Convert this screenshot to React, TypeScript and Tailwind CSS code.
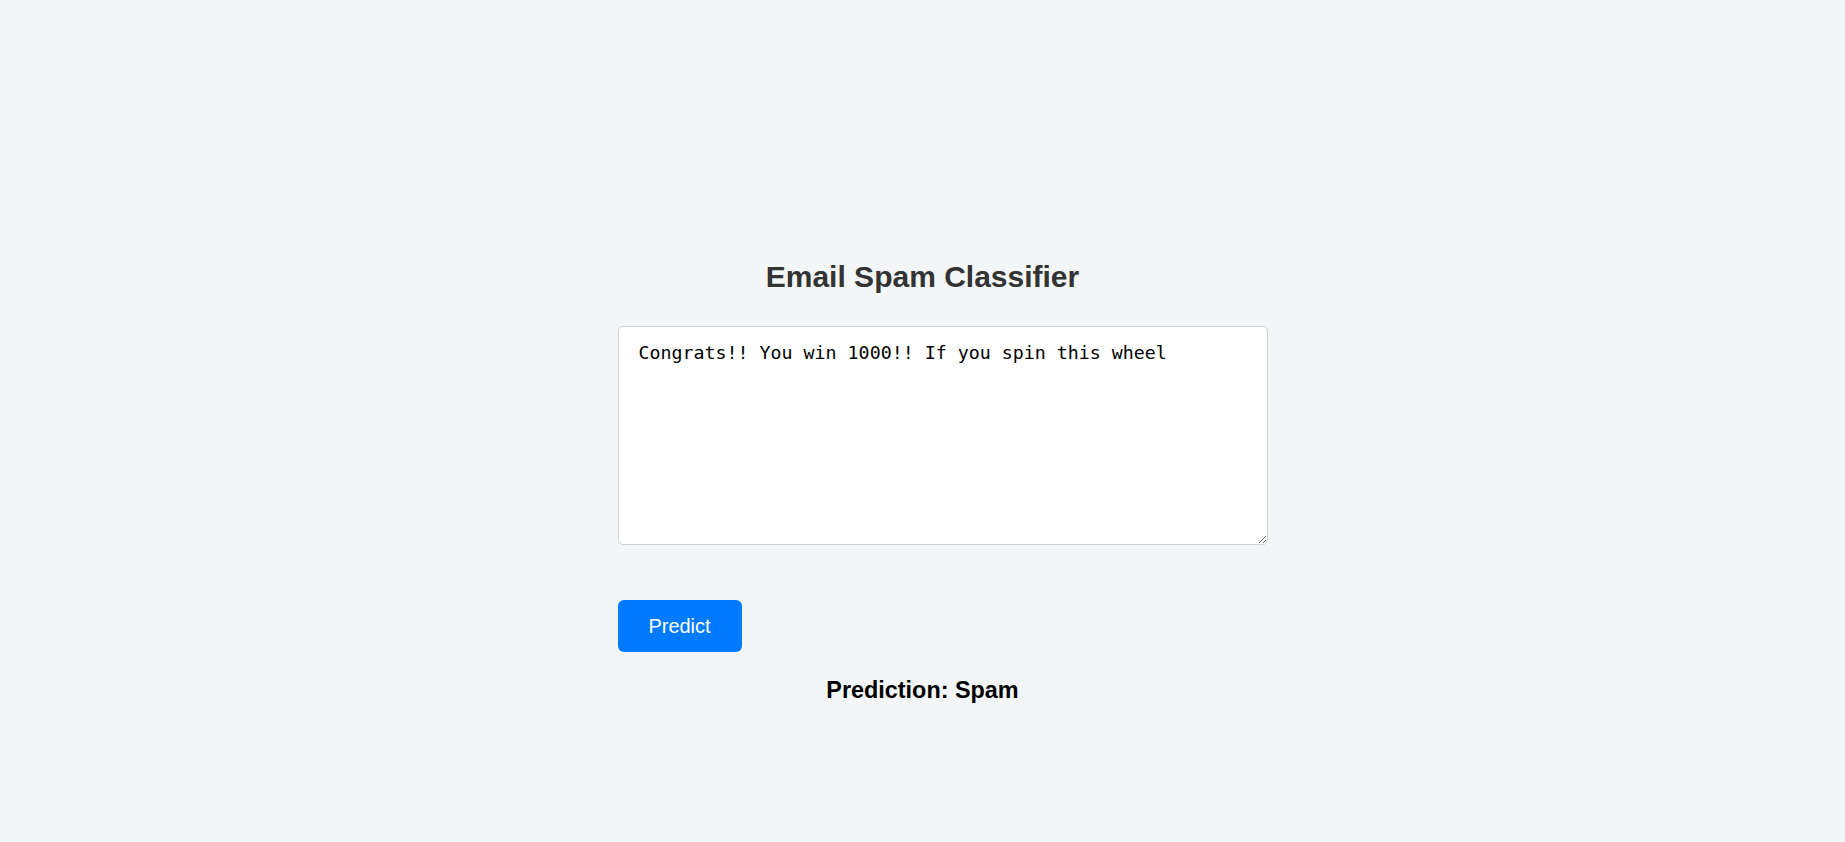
import { useState } from 'react';

export default function App() {
  const [text, setText] = useState('Congrats!! You win 1000!! If you spin this wheel');

  return (
    <div className="min-h-[842px] bg-[#f3f6f7] pt-[260px] font-['Liberation_Sans',Arial,sans-serif]">
      <div className="w-[610px] mx-auto">
        <h2 className="text-center text-[30px] leading-[34px] font-bold text-[#333333]">
          Email Spam Classifier
        </h2>

        <textarea
          value={text}
          onChange={e => setText(e.target.value)}
          className="block mt-[32px] w-[650px] h-[219px] bg-white border border-[#cfd2d5] rounded-[5px] pt-[15px] px-[20px] text-[18.3px] leading-[21px] text-black font-['DejaVu_Sans_Mono',monospace] outline-none"
        />

        <button className="mt-[55px] w-[124px] h-[52px] rounded-[6px] bg-[#007bff] text-white text-[20px] leading-[24px]">
          Predict
        </button>

        <h3 className="mt-[25px] text-center text-[23.4px] leading-[26px] font-bold text-black">
          Prediction: Spam
        </h3>
      </div>
    </div>
  );
}
